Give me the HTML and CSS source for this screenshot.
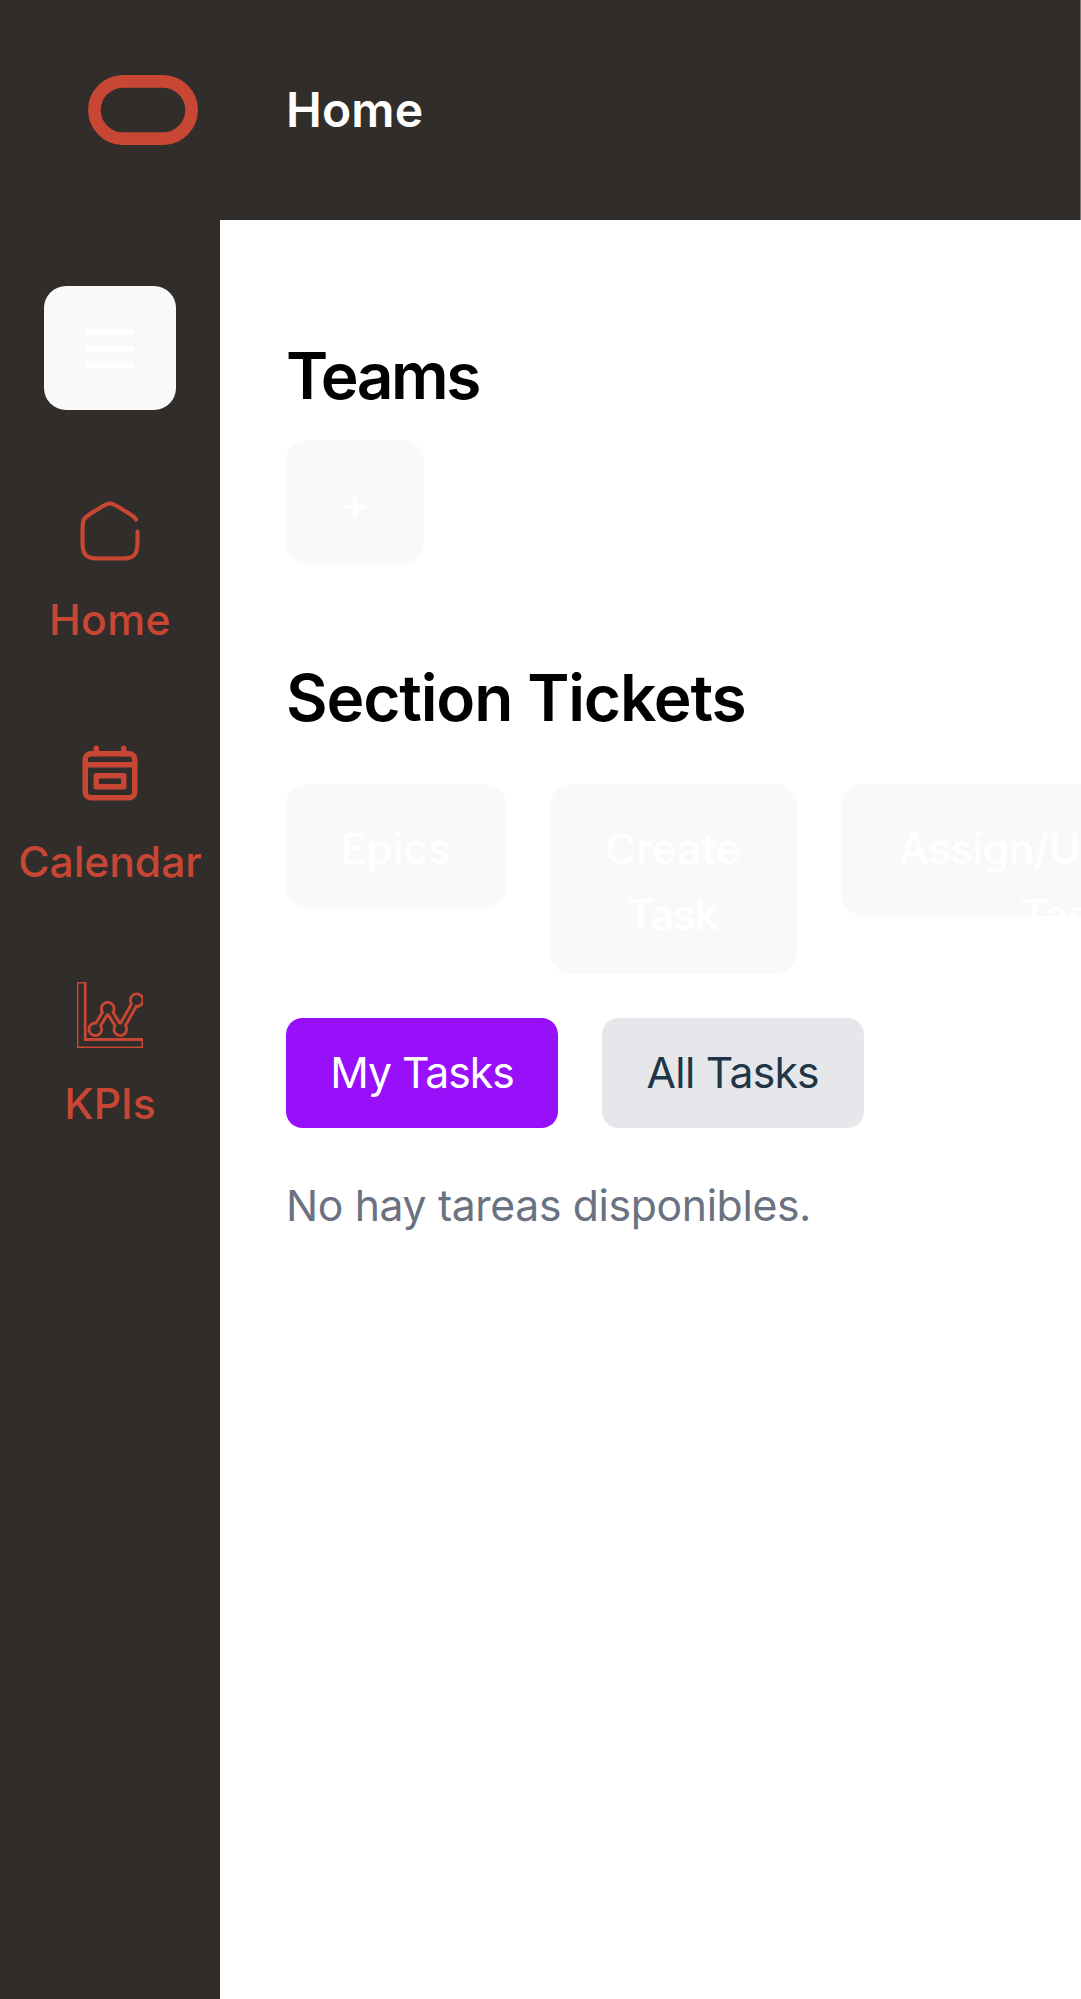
FILE: index.html
```html
<!DOCTYPE html>
<html lang="es">
<head>
<meta charset="utf-8">
<title>Home</title>
<link rel="stylesheet" href="styles.css">
</head>
<body>
<header class="topbar">
  <svg class="logo" viewBox="0 0 110 70"><rect x="6.4" y="6.3" width="97.2" height="57.4" rx="28.7" fill="none" stroke="currentColor" stroke-width="12.7"/></svg>
  <h1 class="page-title">Home</h1>
</header>
<div class="layout">
  <aside class="sidebar">
    <button class="menu-btn" aria-label="Menu">
      <svg class="icon" viewBox="0 0 24 24" fill="none" stroke="#fff" stroke-width="2" stroke-linecap="round"><path d="M4 6H20M4 12H20M4 18H20"/></svg>
    </button>
    <nav class="nav">
      <a class="nav-item">
        <svg class="icon" viewBox="0 0 24 24" fill="none" stroke="currentColor" stroke-width="1.5" stroke-linecap="round"><path d="M22 12.2039V13.725C22 17.6258 22 19.5763 20.8284 20.7881C19.6569 22 17.7712 22 14 22H10C6.22876 22 4.34315 22 3.17157 20.7881C2 19.5763 2 17.6258 2 13.725V12.2039C2 9.91549 2 8.77128 2.5192 7.82274C3.0384 6.87421 3.98695 6.28551 5.88403 5.10813L7.88403 3.86687C9.88939 2.62229 10.8921 2 12 2C13.1079 2 14.1106 2.62229 16.116 3.86687L18.116 5.10812C20.0131 6.28551 20.9616 6.87421 21.4808 7.82274"/></svg>
        <span class="label-home">Home</span>
      </a>
      <a class="nav-item">
        <svg class="icon" viewBox="0 0 24 24" fill="none" stroke="currentColor" stroke-width="2" stroke-linecap="round" stroke-linejoin="round"><path d="M3 9H21M7 3V5M17 3V5"/><rect x="3" y="5" width="18" height="16" rx="2"/><path d="M7 13H17V17H7Z"/></svg>
        <span class="label-calendar">Calendar</span>
      </a>
      <a class="nav-item">
        <svg class="icon" viewBox="0 0 66 66" fill="none" stroke="currentColor">
          <path d="M0 0H8.2V57.5H66V66H0Z" stroke-width="2.8"/>
          <path d="M18.3 47.3L30.7 26.7L43.3 47.3L59.7 18" stroke-width="8.4"/>
          <g fill="currentColor" stroke="none"><circle cx="18.3" cy="47.3" r="7.8"/><circle cx="30.7" cy="26.7" r="7.8"/><circle cx="43.3" cy="47.3" r="7.8"/><circle cx="59.7" cy="18.2" r="7.8"/></g>
          <g fill="#312d2a" stroke="none"><circle cx="18.3" cy="47.3" r="4.9"/><circle cx="30.7" cy="26.7" r="4.9"/><circle cx="43.3" cy="47.3" r="4.9"/><circle cx="59.7" cy="18.2" r="4.9"/></g>
          <path d="M18.3 47.3L30.7 26.7L43.3 47.3L59.7 18" stroke="#312d2a" stroke-width="2.4"/>
          <path d="M66 14V22" stroke-width="2"/>
        </svg>
        <span>KPIs</span>
      </a>
    </nav>
  </aside>
  <main class="content">
    <h2 class="heading heading-teams">Teams</h2>
    <button class="btn btn-add">+</button>
    <h2 class="heading heading-tickets">Section Tickets</h2>
    <div class="actions">
      <button class="btn btn-epics">Epics</button>
      <button class="btn btn-create">Create <span class="task">Task</span></button>
      <button class="btn btn-assign">Assign/Unassign <span class="task">Task</span></button>
    </div>
    <div class="tabs">
      <button class="tab tab-active">My Tasks</button>
      <button class="tab tab-all">All Tasks</button>
    </div>
    <p class="empty">No hay tareas disponibles.</p>
  </main>
</div>
</body>
</html>
```
FILE: styles.css
```css
* { box-sizing: border-box; margin: 0; }
body {
  height: 1999px;
  overflow: hidden;
  display: flex;
  flex-direction: column;
  background: #fff;
  font: 400 42.7px/66px Inter, "Liberation Sans", sans-serif;
}
button { font: inherit; border: 0; padding: 0; }
.topbar {
  flex: none;
  height: 220px;
  display: flex;
  align-items: center;
  gap: 88px;
  padding-left: 88px;
  background: #312d2a;
  border-right: 1px solid #7b7876;
}
.logo { width: 110px; height: 70px; color: #c74634; }
.page-title { font-size: 48px; font-weight: 600; letter-spacing: .17px; color: #fff; }
.layout { flex: 1; display: flex; min-height: 0; }
.sidebar {
  flex: none;
  width: 220px;
  display: flex;
  flex-direction: column;
  align-items: center;
  gap: 88px;
  padding-top: 66px;
  background: #312d2a;
}
.menu-btn {
  width: 132px;
  height: 124px;
  padding-top: 2px;
  display: flex;
  align-items: center;
  justify-content: center;
  border-radius: 22px;
  background: #f9f9f9;
}
.icon { width: 66px; height: 66px; display: block; overflow: hidden; }
.nav { display: flex; flex-direction: column; gap: 87px; color: #c74634; font-weight: 450; }
.nav-item { display: flex; flex-direction: column; align-items: center; gap: 23px; }
.label-home { letter-spacing: .4px; }
.label-calendar { letter-spacing: -.1px; }
.content { flex: 1; min-width: 0; padding: 112px 0 0 66px; overflow: hidden; }
.heading { font-size: 64px; line-height: 88px; font-weight: 600; color: #000; }
.heading-teams { letter-spacing: -2.45px; }
.heading-tickets { margin-top: 90px; letter-spacing: -1.15px; }
.btn {
  flex: none;
  display: block;
  height: 124px;
  padding-top: 32px;
  border-radius: 22px;
  background: #f9f9f9;
  color: #fff;
  font-weight: 500;
  text-align: center;
  overflow: hidden;
}
.btn-add { width: 138px; margin-top: 20px; padding-top: 4px; }
.actions { display: flex; align-items: flex-start; gap: 44px; width: max-content; margin-top: 42px; }
.btn-epics { width: 220px; padding: 32px 0 26px; }
.btn-create { width: 247px; height: 190px; padding: 32px 50px 26px 49px; }
.btn-assign { width: 451px; height: 132px; padding: 32px 48px 0; letter-spacing: -.6px; }
.task { display: block; margin-left: -2px; letter-spacing: -1.4px; }
.tabs { display: flex; gap: 44px; margin-top: 43.5px; }
.tab { height: 110px; padding-top: 1px; border-radius: 16.5px; letter-spacing: -1px; }
.tab-active { width: 272px; background: #9810fa; color: #fff; }
.tab-all { width: 261.5px; background: #e5e7eb; color: #213547; letter-spacing: -.75px; }
.empty { margin-top: 45px; color: #6a7282; letter-spacing: -.35px; }
```
